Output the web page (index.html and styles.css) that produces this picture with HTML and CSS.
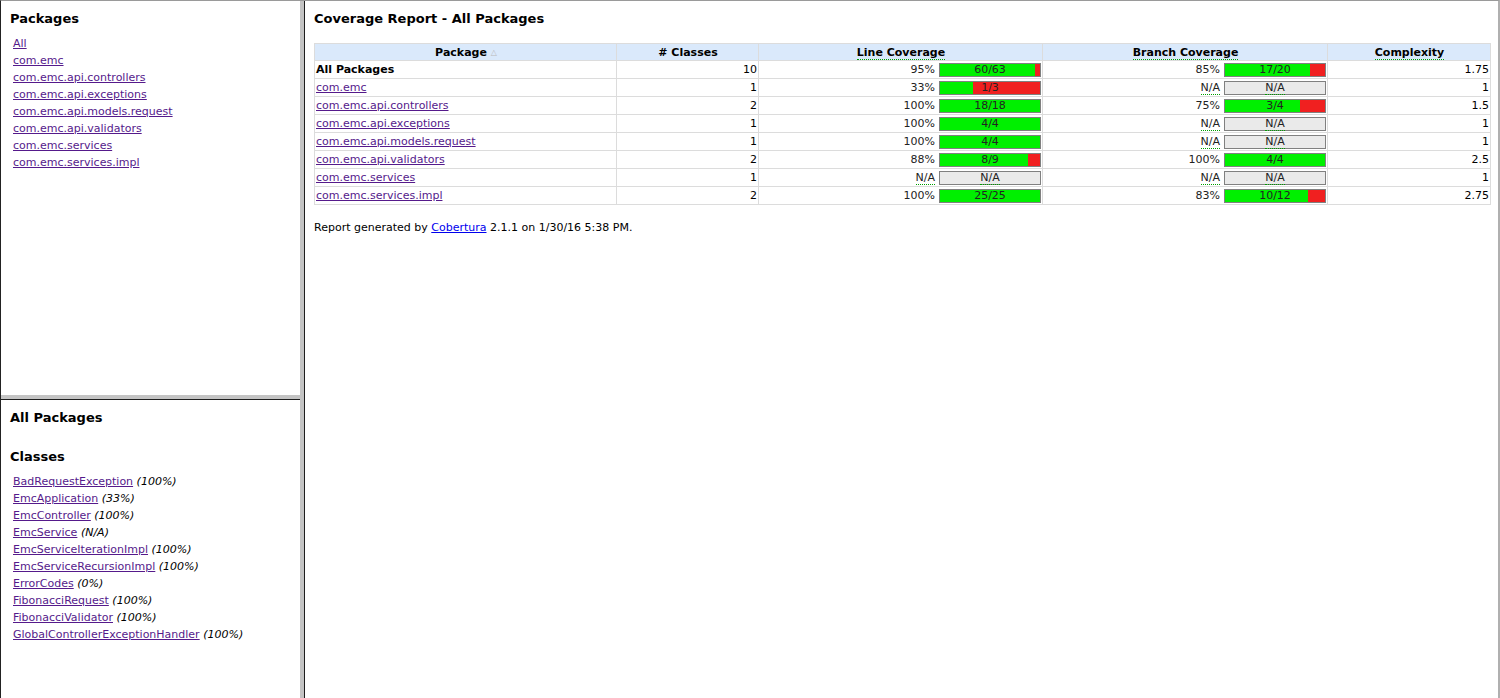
FILE: index.html
```html
<!DOCTYPE html>
<html>
<head>
<meta charset="utf-8">
<title>Coverage Report</title>
<link rel="stylesheet" href="styles.css">
</head>
<body>
<div class="frameset">
  <div class="left">
    <div class="pane pkgs">
      <h5>Packages</h5>
      <ul class="links">
        <li><a href="#">All</a></li>
        <li><a href="#">com.emc</a></li>
        <li><a href="#">com.emc.api.controllers</a></li>
        <li><a href="#">com.emc.api.exceptions</a></li>
        <li><a href="#">com.emc.api.models.request</a></li>
        <li><a href="#">com.emc.api.validators</a></li>
        <li><a href="#">com.emc.services</a></li>
        <li><a href="#">com.emc.services.impl</a></li>
      </ul>
    </div>
    <div class="hsplit"></div>
    <div class="pane classes">
      <h5>All Packages</h5>
      <h5 class="sub">Classes</h5>
      <ul class="links">
        <li><a href="#">BadRequestException</a> <i>(100%)</i></li>
        <li><a href="#">EmcApplication</a> <i>(33%)</i></li>
        <li><a href="#">EmcController</a> <i>(100%)</i></li>
        <li><a href="#">EmcService</a> <i>(N/A)</i></li>
        <li><a href="#">EmcServiceIterationImpl</a> <i>(100%)</i></li>
        <li><a href="#">EmcServiceRecursionImpl</a> <i>(100%)</i></li>
        <li><a href="#">ErrorCodes</a> <i>(0%)</i></li>
        <li><a href="#">FibonacciRequest</a> <i>(100%)</i></li>
        <li><a href="#">FibonacciValidator</a> <i>(100%)</i></li>
        <li><a href="#">GlobalControllerExceptionHandler</a> <i>(100%)</i></li>
      </ul>
    </div>
  </div>
  <div class="vsplit"></div>
  <div class="main">
    <h1>Coverage Report - All Packages</h1>
    <table class="report">
      <colgroup>
        <col class="c1"><col class="c2"><col class="c3"><col class="c4"><col class="c5">
      </colgroup>
      <thead>
        <tr>
          <td class="heading">Package <span class="sort">&#9651;</span></td>
          <td class="heading"># Classes</td>
          <td class="heading"><span class="abbr">Line Coverage</span></td>
          <td class="heading"><span class="abbr">Branch Coverage</span></td>
          <td class="heading"><span class="abbr">Complexity</span></td>
        </tr>
      </thead>
      <tbody>
        <tr>
          <td><b>All Packages</b></td>
          <td class="value">10</td>
          <td><div class="cov"><span class="pct">95%</span><div class="bar"><div class="green" style="width:95px"></div><span class="txt">60/63</span></div></div></td>
          <td><div class="cov"><span class="pct">85%</span><div class="bar"><div class="green" style="width:85px"></div><span class="txt">17/20</span></div></div></td>
          <td class="value">1.75</td>
        </tr>
        <tr>
          <td><a href="#">com.emc</a></td>
          <td class="value">1</td>
          <td><div class="cov"><span class="pct">33%</span><div class="bar"><div class="green" style="width:33px"></div><span class="txt">1/3</span></div></div></td>
          <td><div class="cov"><span class="pct"><span class="abbr">N/A</span></span><div class="bar na"><span class="txt"><span class="abbr">N/A</span></span></div></div></td>
          <td class="value">1</td>
        </tr>
        <tr>
          <td><a href="#">com.emc.api.controllers</a></td>
          <td class="value">2</td>
          <td><div class="cov"><span class="pct">100%</span><div class="bar"><div class="green" style="width:100px"></div><span class="txt">18/18</span></div></div></td>
          <td><div class="cov"><span class="pct">75%</span><div class="bar"><div class="green" style="width:75px"></div><span class="txt">3/4</span></div></div></td>
          <td class="value">1.5</td>
        </tr>
        <tr>
          <td><a href="#">com.emc.api.exceptions</a></td>
          <td class="value">1</td>
          <td><div class="cov"><span class="pct">100%</span><div class="bar"><div class="green" style="width:100px"></div><span class="txt">4/4</span></div></div></td>
          <td><div class="cov"><span class="pct"><span class="abbr">N/A</span></span><div class="bar na"><span class="txt"><span class="abbr">N/A</span></span></div></div></td>
          <td class="value">1</td>
        </tr>
        <tr>
          <td><a href="#">com.emc.api.models.request</a></td>
          <td class="value">1</td>
          <td><div class="cov"><span class="pct">100%</span><div class="bar"><div class="green" style="width:100px"></div><span class="txt">4/4</span></div></div></td>
          <td><div class="cov"><span class="pct"><span class="abbr">N/A</span></span><div class="bar na"><span class="txt"><span class="abbr">N/A</span></span></div></div></td>
          <td class="value">1</td>
        </tr>
        <tr>
          <td><a href="#">com.emc.api.validators</a></td>
          <td class="value">2</td>
          <td><div class="cov"><span class="pct">88%</span><div class="bar"><div class="green" style="width:88px"></div><span class="txt">8/9</span></div></div></td>
          <td><div class="cov"><span class="pct">100%</span><div class="bar"><div class="green" style="width:100px"></div><span class="txt">4/4</span></div></div></td>
          <td class="value">2.5</td>
        </tr>
        <tr>
          <td><a href="#">com.emc.services</a></td>
          <td class="value">1</td>
          <td><div class="cov"><span class="pct"><span class="abbr">N/A</span></span><div class="bar na"><span class="txt"><span class="abbr">N/A</span></span></div></div></td>
          <td><div class="cov"><span class="pct"><span class="abbr">N/A</span></span><div class="bar na"><span class="txt"><span class="abbr">N/A</span></span></div></div></td>
          <td class="value">1</td>
        </tr>
        <tr>
          <td><a href="#">com.emc.services.impl</a></td>
          <td class="value">2</td>
          <td><div class="cov"><span class="pct">100%</span><div class="bar"><div class="green" style="width:100px"></div><span class="txt">25/25</span></div></div></td>
          <td><div class="cov"><span class="pct">83%</span><div class="bar"><div class="green" style="width:83px"></div><span class="txt">10/12</span></div></div></td>
          <td class="value">2.75</td>
        </tr>
      </tbody>
    </table>
    <p class="footer">Report generated by <a class="ext" href="#">Cobertura</a> 2.1.1 on 1/30/16 5:38 PM.</p>
  </div>
</div>
</body>
</html>
```

FILE: styles.css
```css
html, body {
  margin: 0;
  padding: 0;
  height: 100%;
  background: #ffffff;
}
body {
  font-family: "DejaVu Sans", Verdana, sans-serif;
  font-size: 11px;
  color: #000;
  overflow: hidden;
}
a {
  color: #551a8b;
  text-decoration: underline;
}
a.ext {
  color: #0000ee;
}
.frameset {
  display: flex;
  height: 698px;
  box-sizing: border-box;
  border-top: 1px solid #9a9a9a;
  border-left: 1px solid #222;
  border-right: 2px solid #b0b0b0;
}
.left {
  width: 299px;
  display: flex;
  flex-direction: column;
}
.pane {
  padding-left: 9px;
}
.pkgs {
  height: 394px;
}
.hsplit {
  height: 4px;
  background: #c4c4c4;
  border-bottom: 1px solid #1e1e1e;
}
.classes {
  flex: 1;
}
.vsplit {
  width: 4px;
  background: #c4c4c4;
  border-right: 1px solid #1e1e1e;
}
h5 {
  font-size: 13px;
  font-weight: bold;
  line-height: 16px;
  margin: 10px 0 0 0;
}
.classes h5 {
  margin-top: 10px;
}
.classes h5.sub {
  margin-top: 23px;
}
.links {
  list-style: none;
  margin: 8px 0 0 0;
  padding: 0 0 0 3px;
  line-height: 17px;
}
.classes .links {
  margin-top: 8px;
}
.main {
  flex: 1;
  padding: 0 7px 0 9px;
}
h1 {
  font-size: 13px;
  font-weight: bold;
  line-height: 16px;
  margin: 10px 0 0 0;
}
table.report {
  border-collapse: collapse;
  width: 1176px;
  margin-top: 16px;
  table-layout: fixed;
}
col.c1 { width: 302px; }
col.c2 { width: 142px; }
col.c3 { width: 284px; }
col.c4 { width: 285px; }
col.c5 { width: 163px; }
table.report td {
  border: 1px solid #dcdcdc;
  padding: 2px 1px 1px 1px;
  line-height: 14px;
  height: 14px;
  text-align: left;
  white-space: nowrap;
}
table.report td.heading {
  background: #dae9fb;
  font-weight: bold;
  text-align: center;
  line-height: 13px;
  height: 13px;
  padding: 2px 1px 1px 2px;
}
table.report td.value {
  text-align: right;
}
.sort {
  color: #bbb;
  font-size: 8px;
  font-weight: normal;
  vertical-align: top;
}
.abbr {
  border-bottom: 1px dotted #00a000;
}
.cov {
  display: flex;
  justify-content: flex-end;
  align-items: center;
  gap: 4px;
  height: 14px;
}
.pct {
  color: #222;
}
.bar {
  position: relative;
  width: 100px;
  height: 12px;
  border: 1px solid #808080;
  background: #f02020;
  display: flex;
}
.bar.na {
  background: #eaeaea;
}
.green {
  background: #00f000;
  height: 100%;
}
.txt {
  position: absolute;
  left: 0;
  right: 0;
  top: 0;
  text-align: center;
  line-height: 12px;
  color: #222;
}
.footer {
  margin: 16px 0 0 0;
  line-height: 14px;
}
```
